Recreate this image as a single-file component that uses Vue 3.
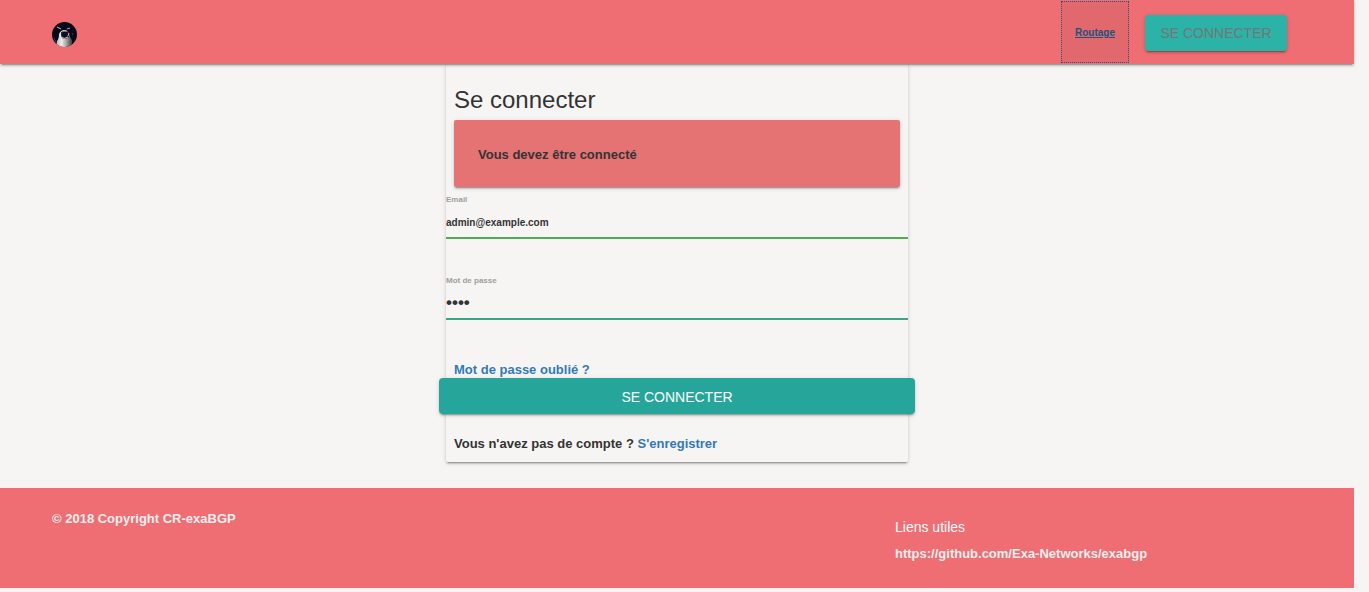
<script setup>
import { ref } from 'vue'

const email = ref('admin@example.com')
const password = ref('demo')
</script>

<template>
  <div class="page">
    <header class="navbar">
      <a class="brand" href="#" aria-label="CR-exaBGP">
        <svg class="logo" viewBox="0 0 25 25" aria-hidden="true">
          <defs>
            <clipPath id="logo-disc"><circle cx="12.5" cy="12.5" r="12.5" /></clipPath>
            <linearGradient id="logo-belly" x1="0" x2="1">
              <stop offset="0" stop-color="#b4b4b4" />
              <stop offset="0.35" stop-color="#ececec" />
              <stop offset="0.65" stop-color="#a4a4a4" />
              <stop offset="1" stop-color="#3c3c42" />
            </linearGradient>
          </defs>
          <g clip-path="url(#logo-disc)">
            <rect width="25" height="25" fill="#090718" />
            <path d="M4 25 L5 19 Q7 17 7 12 Q9 8 12 8 Q16 8 17 12 Q18 16 20 18 L20 25Z" fill="url(#logo-belly)" />
            <path d="M9 10 Q13 8 17 10 L17 15 Q15 17 12 17 Q9 16 9 13Z" fill="#25252d" />
            <circle cx="13" cy="12.5" r="2.7" fill="#080c28" />
            <path d="M5 5 L9 7 M15 7 L18 6" stroke="#9a9aa4" stroke-width="1.3" />
            <path d="M11 9 L15 9 M17 11 L16 14" stroke="#b6b6b6" stroke-width="1" fill="none" />
            <path d="M9 15 Q12 18 16 15" stroke="#c9c9c9" stroke-width="1" fill="none" />
            <path d="M2 17h1M3 19h1M20 12h1" stroke="#4b5d80" />
          </g>
        </svg>
      </a>
      <nav class="menu">
        <a class="menu-link" href="#">Routage</a>
        <button class="btn nav-btn" type="button">SE CONNECTER</button>
      </nav>
    </header>

    <main>
      <form class="card" @submit.prevent>
        <div class="inset">
          <h1>Se connecter</h1>
          <div class="alert" role="alert">Vous devez être connecté</div>
        </div>
        <div class="field">
          <label for="email">Email</label>
          <input id="email" v-model="email" class="valid" type="email" />
        </div>
        <div class="field">
          <label for="password">Mot de passe</label>
          <input id="password" v-model="password" type="password" />
        </div>
        <p class="inset forgot"><a href="#">Mot de passe oublié ?</a></p>
        <button class="btn submit" type="submit">SE CONNECTER</button>
        <p class="inset register">Vous n'avez pas de compte ? <a href="#">S'enregistrer</a></p>
      </form>
    </main>

    <footer>
      <p class="copyright">© 2018 Copyright CR-exaBGP</p>
      <div class="links">
        <h2>Liens utiles</h2>
        <a href="https://github.com/Exa-Networks/exabgp">https://github.com/Exa-Networks/exabgp</a>
      </div>
    </footer>
  </div>
</template>

<style>
body {
  background: #f6f5f4;
}
</style>

<style scoped>
* {
  box-sizing: border-box;
}

.page {
  margin-right: 15px;
  padding-bottom: 4px;
  color: #333;
  font: bold 13px/20px "Liberation Sans", Arial, sans-serif;
}

h1,
h2,
p {
  margin: 0;
}

a {
  color: #337ab7;
  text-decoration: none;
}

.navbar {
  position: relative;
  display: flex;
  justify-content: space-between;
  align-items: center;
  height: 64px;
  padding: 0 67px 0 52px;
  background: #ee6e73;
  box-shadow: 0 2px 2px rgba(0, 0, 0, 0.14), 0 1px 5px rgba(0, 0, 0, 0.12), 0 3px 1px -2px rgba(0, 0, 0, 0.2);
}

.brand {
  display: flex;
  padding-top: 5px;
}

.logo {
  width: 25px;
  height: 25px;
}

.menu {
  display: flex;
  align-items: center;
  gap: 16px;
}

.menu-link {
  padding: 1px 13px 0;
  border: 1px dotted #23527c;
  background: rgba(0, 0, 0, 0.05);
  color: #23527c;
  font-size: 10px;
  line-height: 59px;
  text-decoration: underline;
}

.btn {
  height: 36px;
  border: 0;
  border-radius: 4px;
  background: #26a69a;
  color: #fff;
  font: 14px/36px "Liberation Sans", Arial, sans-serif;
  box-shadow: 0 2px 2px rgba(0, 0, 0, 0.14), 0 1px 5px rgba(0, 0, 0, 0.12), 0 3px 1px -2px rgba(0, 0, 0, 0.2);
  cursor: pointer;
}

.nav-btn {
  min-width: 142px;
  margin-top: 2px;
  padding: 0 12px;
  background: #2bb3a8;
  color: #757575;
}

.card {
  width: 462px;
  max-width: 100%;
  margin: 0 auto 26px;
  padding: 22px 0 8px;
  border-radius: 2px;
  box-shadow: 0 2px 2px rgba(0, 0, 0, 0.14), 0 1px 5px rgba(0, 0, 0, 0.12), 0 3px 1px -2px rgba(0, 0, 0, 0.2);
}

.inset {
  padding: 0 8px;
}

h1 {
  font-size: 24px;
  font-weight: normal;
  line-height: 28px;
}

.alert {
  margin: 6px 0 8px;
  padding: 25px 24px 23px;
  border-radius: 2px;
  background: #e57373;
  line-height: 19px;
  box-shadow: 0 2px 2px rgba(0, 0, 0, 0.14), 0 1px 5px rgba(0, 0, 0, 0.12), 0 3px 1px -2px rgba(0, 0, 0, 0.2);
}

.field {
  height: 81px;
}

.field label {
  display: block;
  color: #9e9e9e;
  font-size: 8px;
  line-height: 10px;
}

.field input {
  display: block;
  width: 100%;
  height: 34px;
  padding: 2px 0 0;
  border: 0;
  border-bottom: 2px solid #33aa85;
  outline: 0;
  background: transparent;
  color: #333;
  font: bold 10px "Liberation Sans", Arial, sans-serif;
}

.field input[type="password"] {
  font-size: 17px;
}

.field input.valid {
  border-color: #4caf50;
}

.forgot {
  padding-top: 5px;
  line-height: 16px;
}

.submit {
  display: block;
  width: calc(100% + 14px);
  margin: 0 -7px 20px;
}

footer {
  display: grid;
  grid-template-columns: 2fr 1fr;
  gap: 29px;
  min-height: 100px;
  padding: 21px 52px;
  background: #ee6e73;
  color: #f3eeee;
}

.links {
  padding-top: 8px;
}

.links h2 {
  margin-bottom: 7px;
  color: #fff;
  font-size: 14px;
  font-weight: normal;
  line-height: 20px;
}

.links a {
  color: #eee;
}
</style>
